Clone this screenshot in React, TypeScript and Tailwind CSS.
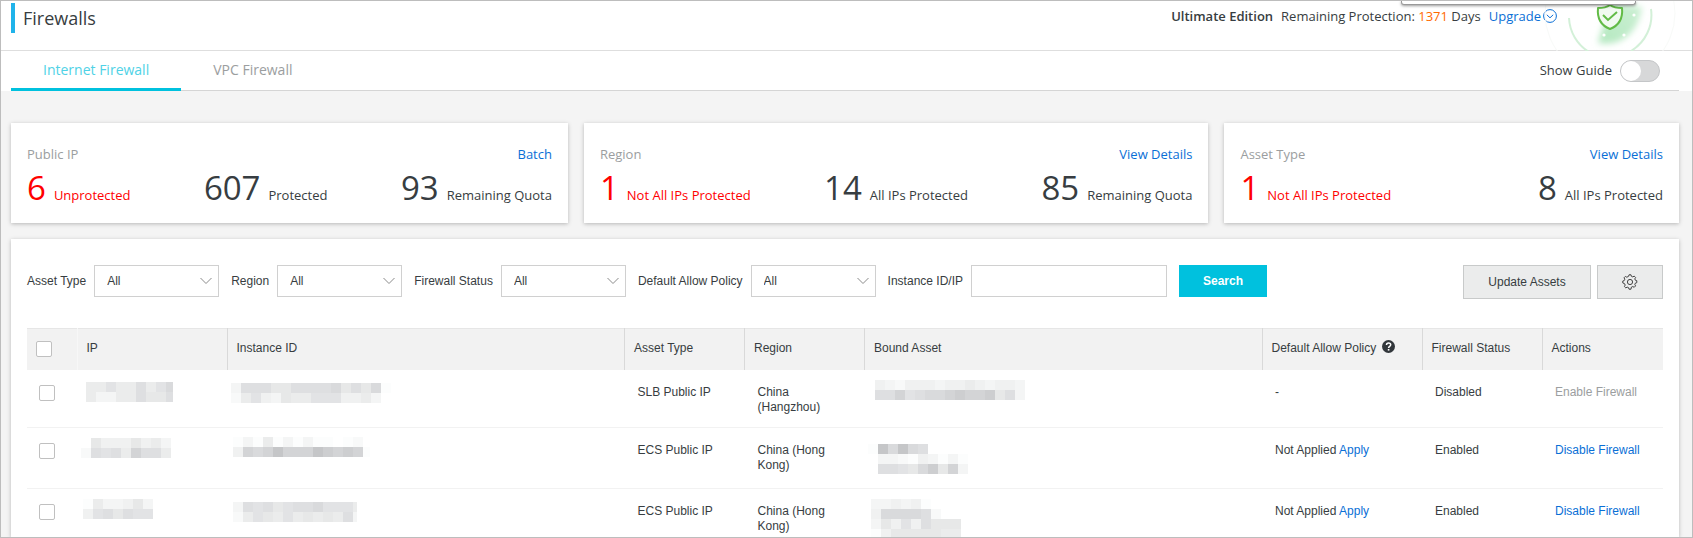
import React, { useState } from 'react';
import clsx from 'clsx';

type Tiles = { x: number; y: number; width: number; rows: string[] };

type AssetRow = {
  id: string;
  height: number;
  ip: Tiles;
  instance: Tiles;
  assetType: string;
  region: string;
  bound: Tiles;
  policy: 'none' | 'notApplied';
  enabled: boolean;
};

const SUMMARY = [
  {
    title: 'Public IP',
    action: 'Batch',
    stats: [
      { value: 6, label: 'Unprotected', alert: true },
      { value: 607, label: 'Protected' },
      { value: 93, label: 'Remaining Quota' },
    ],
  },
  {
    title: 'Region',
    action: 'View Details',
    stats: [
      { value: 1, label: 'Not All IPs Protected', alert: true },
      { value: 14, label: 'All IPs Protected' },
      { value: 85, label: 'Remaining Quota' },
    ],
  },
  {
    title: 'Asset Type',
    action: 'View Details',
    stats: [
      { value: 1, label: 'Not All IPs Protected', alert: true },
      { value: 8, label: 'All IPs Protected' },
    ],
  },
];

const FILTERS = ['Asset Type', 'Region', 'Firewall Status', 'Default Allow Policy'];

// One letter per 10px tile, darker towards "a"; "." is empty
const SHADES: Record<string, string> = {
  a: '#c5c6c8',
  b: '#cdced0',
  c: '#d3d4d6',
  d: '#d9dadc',
  e: '#dedfe1',
  f: '#e2e3e5',
  g: '#e7e8e8',
  h: '#ebecec',
  i: '#f0f1f1',
  j: '#f4f5f5',
  k: '#f8f9f9',
  l: '#fcfdfd',
};

const ROWS: AssetRow[] = [
  {
    id: 'row-1',
    height: 57,
    ip: { x: 9, y: 12, width: 87, rows: ['hhfhhehfd', 'hjjhhegge'] },
    instance: { x: 4, y: 13, width: 160, rows: ['jeeeggeeeedgegdl', 'khfijghhfffiihj.'] },
    assetType: 'SLB Public IP',
    region: 'China (Hangzhou)',
    bound: { x: 10, y: 10, width: 150, rows: ['ijkiiijiihijiij', 'eecfeddcbccbgej'] },
    policy: 'none',
    enabled: false,
  },
  {
    id: 'row-2',
    height: 60,
    ip: { x: 4, y: 10, width: 90, rows: ['.giiigihj', 'kefehceeh'] },
    instance: { x: 6, y: 9, width: 137, rows: ['ljlhljljll.lk.', 'icdcacccabcbcl'] },
    assetType: 'ECS Public IP',
    region: 'China (Hong Kong)',
    bound: { x: 3, y: 16, width: 100, rows: ['ladade....', '.jjklijljl', '.eefgdbgcj'] },
    policy: 'notApplied',
    enabled: true,
  },
  {
    id: 'row-3',
    height: 60,
    ip: { x: 6, y: 10, width: 70, rows: ['lhjjigj', 'ifegeff'] },
    instance: { x: 6, y: 13, width: 124, rows: ['jefegfeedfffh', 'khfghfhghghej'] },
    assetType: 'ECS Public IP',
    region: 'China (Hong Kong)',
    bound: { x: 6, y: 10, width: 90, rows: ['jjijil...', 'iddddek..', 'jgifieggg', 'liggggghh'] },
    policy: 'notApplied',
    enabled: true,
  },
];

function MaskedValue({ tiles, height }: { tiles: Tiles; height: number }) {
  return (
    <svg className="block w-full" height={height} shapeRendering="crispEdges" aria-hidden="true">
      {tiles.rows.map((row, r) =>
        row.split('').map((shade, c) =>
          shade === '.' ? null : (
            <rect
              key={`${r}-${c}`}
              x={tiles.x + c * 10}
              y={tiles.y + r * 10}
              width={Math.min(10, tiles.width - c * 10)}
              height="10"
              fill={SHADES[shade]}
            />
          )
        )
      )}
    </svg>
  );
}

function ShieldBadge() {
  return (
    <svg className="absolute right-3 top-0 h-[50px] w-[140px]" viewBox="0 0 140 50" fill="none" aria-hidden="true">
      <defs>
        <filter id="soft" x="-30%" y="-30%" width="160%" height="160%">
          <feGaussianBlur stdDeviation="3" />
        </filter>
        <linearGradient id="glow" x1="0" y1="1" x2="1" y2="0">
          <stop offset="0" stopColor="#b4e8c0" />
          <stop offset="1" stopColor="#cdf0d4" />
        </linearGradient>
      </defs>
      <circle cx="70" cy="12" r="65" stroke="#f8faf8" />
      <path d="M58 42C78 46 98 34 102 6L70 2z" fill="url(#glow)" filter="url(#soft)" />
      <path d="M29 17a42 42 0 0 0 20 34M91 50a42 42 0 0 0 20-42" stroke="#d3f0d8" strokeWidth="2" />
      <path d="M58 7c5 0 9-1 12-3 3 2 7 3 12 3 1 10-2 17-12 21-10-4-13-11-12-21z" fill="#f1faf0" stroke="#62bb46" strokeWidth="2" strokeLinejoin="round" />
      <path d="M63 14l5 5 9-8" stroke="#62bb46" strokeWidth="2" />
      <circle cx="94" cy="14" r="1.600" fill="#fff" />
      <circle cx="84" cy="34" r="1.600" fill="#fff" />
      <circle cx="64" cy="34" r="1.600" fill="#fff" />
    </svg>
  );
}

function GearIcon() {
  return (
    <svg width="16" height="16" viewBox="0 0 16 16" fill="none" stroke="#444" aria-hidden="true">
      <path d="M6.6 2.3 7 .8h2l.4 1.5 1.4.6 1.4-.8 1.4 1.4-.8 1.4.6 1.4 1.4.4v2l-1.4.4-.6 1.4.8 1.4-1.4 1.4-1.4-.8-1.4.6L9 15.2H7l-.4-1.5-1.4-.6-1.4.8-1.4-1.4.8-1.4-.6-1.4L.8 9V7l1.4-.4.6-1.4-.8-1.4 1.4-1.4 1.4.8z" />
      <circle cx="8" cy="8" r="2.6" />
    </svg>
  );
}

function FilterSelect({ label }: { label: string }) {
  const id = `filter-${label.toLowerCase().replace(/ /g, '-')}`;
  return (
    <div className="flex items-center gap-2">
      <label htmlFor={id}>{label}</label>
      <div className="relative">
        <select id={id} className="block h-8 w-[125px] appearance-none border border-[#d0d0d0] bg-white pl-3 text-xs">
          <option>All</option>
        </select>
        <svg className="pointer-events-none absolute right-[7px] top-3 h-2 w-3" viewBox="0 0 12 8" fill="none" stroke="#8a8a8a" aria-hidden="true">
          <path d="M.5 1 6 6.500 11.500 1" />
        </svg>
      </div>
    </div>
  );
}

const CHECKBOX = 'block size-4 appearance-none rounded-[2px] border border-[#c0c0c0] bg-white checked:bg-[#00c1de]';
const HEAD = 'border-r border-[#d9d9d9] pl-[9px] pb-[3px] text-left font-normal';
const CELL = 'pl-[13px] pr-3 pt-[15px] align-top leading-[15px]';

export default function App() {
  const [tab, setTab] = useState('Internet Firewall');
  const [guide, setGuide] = useState(false);

  return (
    <div className="flex h-screen flex-col overflow-hidden border border-[#bdbdbd] bg-[#f4f4f4] font-['Liberation_Sans',sans-serif] text-xs text-[#373d41]">
      <div className="shrink-0 bg-white font-['Open_Sans',sans-serif] text-[13px]">
        <header className="relative flex h-[50px] items-start justify-between border-b border-[#dedede] pl-2.5">
          <h1 className="mt-0.5 flex h-[30px] items-center border-l-4 border-[#20b3ea] pl-2 text-lg">Firewalls</h1>
          <ShieldBadge />
          <div className="absolute right-14 top-0 h-1 w-[235px] rounded-b-[3px] border border-t-0 border-[#999] bg-white shadow-[0_1px_3px_rgba(0,0,0,0.4)]" />
          <div className="mr-[135px] mt-[5px] flex items-center leading-5">
            <b className="mr-2 font-semibold">Ultimate Edition</b>
            <span className="mr-2">
              Remaining Protection: <span className="text-[#ff6a00]">1371</span> Days
            </span>
            <a href="#upgrade" className="flex items-center gap-0.5 text-[#0a6fd6]">
              Upgrade
              <svg width="14" height="14" viewBox="0 0 14 14" fill="none" stroke="currentColor" aria-hidden="true">
                <circle cx="7" cy="7" r="6.400" />
                <path d="M3.800 5.800 7 8.800l3.200-3" />
              </svg>
            </a>
          </div>
        </header>

        <div className="ml-2.5 mr-[13px] flex h-10 items-center justify-between border-b border-[#d5d5d5]">
          <nav className="flex h-10 text-[14px]">
            {['Internet Firewall', 'VPC Firewall'].map(name => (
              <button
                key={name}
                onClick={() => setTab(name)}
                className={clsx(
                  'h-10 border-b-[3px] px-8 pt-0.5',
                  tab === name ? 'border-[#00c1de] text-[#4fd2e6]' : 'border-transparent text-[#9b9ea0]'
                )}
              >
                {name}
              </button>
            ))}
          </nav>
          <label className="mr-[19px] flex items-center gap-2">
            Show Guide
            <input type="checkbox" role="switch" className="peer sr-only" checked={guide} onChange={e => setGuide(e.target.checked)} />
            <span className="flex h-[22px] w-10 rounded-full border border-[#c4c6c8] bg-[#d7d8d9] peer-checked:justify-end peer-checked:bg-[#00c1de]">
              <span className="size-5 rounded-full bg-white" />
            </span>
          </label>
        </div>
      </div>

      <main className="ml-2.5 mr-[13px] flex min-h-0 flex-1 flex-col gap-4 pt-8">
        <section className="flex gap-4 font-['Open_Sans',sans-serif] text-[13px]">
          {SUMMARY.map(card => (
            <div key={card.title} className="h-[100px] flex-auto bg-white px-4 pt-[21px] shadow-[0_1px_4px_rgba(0,0,0,0.25)]">
              <div className="flex justify-between leading-5">
                <span className="text-[#9b9ea0]">{card.title}</span>
                <a href="#details" className="text-[#0a6fd6]">{card.action}</a>
              </div>
              <div className="flex justify-between">
                {card.stats.map(stat => (
                  <div key={stat.label} className={clsx('flex items-baseline gap-2 whitespace-nowrap', stat.alert && 'text-[#ff0000]')}>
                    <span className="text-[33px] leading-[47px]">{stat.value}</span>
                    <span>{stat.label}</span>
                  </div>
                ))}
              </div>
            </div>
          ))}
        </section>

        <section className="min-h-0 flex-1 bg-white px-4 pt-[26px] shadow-[0_1px_4px_rgba(0,0,0,0.25)]">
          <form className="flex items-start justify-between" onSubmit={e => e.preventDefault()}>
            <div className="flex items-center gap-3">
              {FILTERS.map(label => (
                <FilterSelect key={label} label={label} />
              ))}
              <div className="flex items-center gap-2">
                <label htmlFor="instance">Instance ID/IP</label>
                <input id="instance" type="text" className="h-8 w-[196px] border border-[#d0d0d0] px-2" />
              </div>
              <button className="h-8 w-[88px] bg-[#00c1de] font-bold text-white">Search</button>
            </div>
            <div className="flex gap-1.5">
              <button type="button" className="h-[34px] w-32 border border-[#c8caca] bg-[#ebecec]">Update Assets</button>
              <button type="button" aria-label="Settings" className="flex h-[34px] w-[66px] items-center justify-center border border-[#c8caca] bg-[#ebecec]">
                <GearIcon />
              </button>
            </div>
          </form>

          <table className="mt-[29px] w-full table-fixed border-collapse">
            <thead>
              <tr className="h-[41px] border-t border-[#e6e6e6] bg-[#f2f2f2]">
                <th className="w-[50px] border-r border-[#f7f7f7] pl-[9px]">
                  <input type="checkbox" aria-label="Select all" className={CHECKBOX} />
                </th>
                <th className={clsx(HEAD, 'w-[150px]')}>IP</th>
                <th className={HEAD}>Instance ID</th>
                <th className={clsx(HEAD, 'w-[120px]')}>Asset Type</th>
                <th className={clsx(HEAD, 'w-[120px]')}>Region</th>
                <th className={HEAD}>Bound Asset</th>
                <th className={clsx(HEAD, 'w-[160px]')}>
                  <span className="flex gap-1.5">
                    Default Allow Policy
                    <svg width="13" height="13" viewBox="0 0 13 13" aria-hidden="true">
                      <circle cx="6.500" cy="6.500" r="6.500" fill="#32373b" />
                      <path d="M4.500 5c0-2.800 4.200-2.600 4.200-.2C8.700 6.400 6.600 6.300 6.600 8" fill="none" stroke="#fff" strokeWidth="1.500" />
                      <rect x="5.800" y="9" width="1.600" height="1.600" fill="#fff" />
                    </svg>
                  </span>
                </th>
                <th className={clsx(HEAD, 'w-[120px]')}>Firewall Status</th>
                <th className="w-[121px] pl-[9px] pb-[3px] text-left font-normal">Actions</th>
              </tr>
            </thead>
            <tbody>
              {ROWS.map(row => (
                <tr key={row.id} className="border-b border-[#f2f2f2]">
                  <td className="pl-3 pt-[15px] align-top">
                    <input type="checkbox" aria-label="Select row" className={CHECKBOX} />
                  </td>
                  <td className="align-top"><MaskedValue tiles={row.ip} height={row.height} /></td>
                  <td className="align-top"><MaskedValue tiles={row.instance} height={row.height} /></td>
                  <td className={CELL}>{row.assetType}</td>
                  <td className={CELL}>{row.region}</td>
                  <td className="align-top"><MaskedValue tiles={row.bound} height={row.height} /></td>
                  <td className={CELL}>
                    {row.policy === 'none' ? '-' : <>Not Applied <a href="#apply" className="text-[#0a6fd6]">Apply</a></>}
                  </td>
                  <td className={CELL}>{row.enabled ? 'Enabled' : 'Disabled'}</td>
                  <td className={CELL}>
                    {row.enabled ? (
                      <a href="#disable" className="text-[#0a6fd6]">Disable Firewall</a>
                    ) : (
                      <span className="text-[#9b9ea0]">Enable Firewall</span>
                    )}
                  </td>
                </tr>
              ))}
            </tbody>
          </table>
        </section>
      </main>
    </div>
  );
}
